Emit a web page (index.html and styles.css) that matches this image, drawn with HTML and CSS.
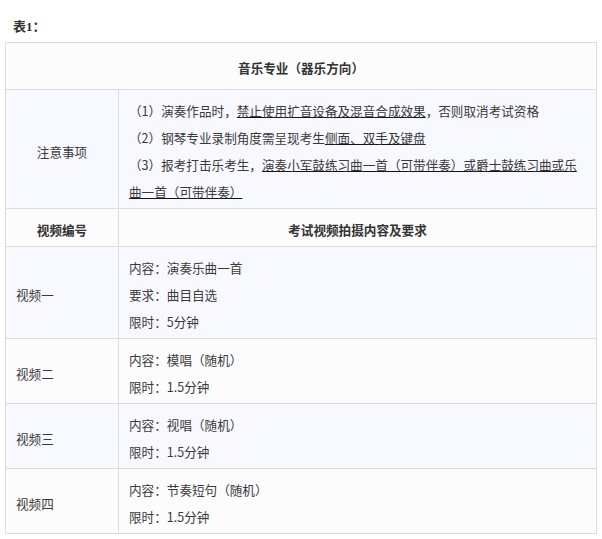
FILE: index.html
```html
<!DOCTYPE html>
<html lang="zh-CN">
<head>
<meta charset="utf-8">
<title>表1</title>
<link rel="stylesheet" href="styles.css">
</head>
<body>
<p class="caption"><strong>表1：</strong></p>
<table class="exam">
  <colgroup><col class="c1"><col class="c2"></colgroup>
  <tr class="odd">
    <th class="title" colspan="2">音乐专业（器乐方向）</th>
  </tr>
  <tr class="even">
    <td class="center">注意事项</td>
    <td>
      <p>（1）演奏作品时，<u>禁止使用扩音设备及混音合成效果</u>，否则取消考试资格</p>
      <p>（2）钢琴专业录制角度需呈现考生<u>侧面、双手及键盘</u></p>
      <p>（3）报考打击乐考生，<u>演奏小军鼓练习曲一首（可带伴奏）或爵士鼓练习曲或乐曲一首（可带伴奏）</u></p>
    </td>
  </tr>
  <tr class="odd">
    <th>视频编号</th>
    <th>考试视频拍摄内容及要求</th>
  </tr>
  <tr class="even">
    <td>视频一</td>
    <td>
      <p>内容：演奏乐曲一首</p>
      <p>要求：曲目自选</p>
      <p>限时：5分钟</p>
    </td>
  </tr>
  <tr class="odd">
    <td>视频二</td>
    <td>
      <p>内容：模唱（随机）</p>
      <p>限时：1.5分钟</p>
    </td>
  </tr>
  <tr class="even">
    <td>视频三</td>
    <td>
      <p>内容：视唱（随机）</p>
      <p>限时：1.5分钟</p>
    </td>
  </tr>
  <tr class="odd">
    <td>视频四</td>
    <td>
      <p>内容：节奏短句（随机）</p>
      <p>限时：1.5分钟</p>
    </td>
  </tr>
</table>
</body>
</html>
```

FILE: styles.css
```css
html, body {
  margin: 0;
  padding: 0;
  background: #ffffff;
}

body {
  font-family: "Noto Sans CJK SC", "Noto Sans", sans-serif;
  color: #333333;
}

.caption {
  margin: 0;
  padding: 18px 0 6px 13px;
  line-height: 18px;
  font-size: 13px;
  font-family: "Liberation Serif", "Noto Sans CJK SC", serif;
  color: #333333;
}

.exam {
  margin-left: 5px;
  width: 592px;
  border-collapse: collapse;
  border: 1px solid #dcdcdc;
  font-size: 12.6px;
  line-height: 27px;
  table-layout: fixed;
  color: #3a3a3a;
}

.c1 {
  width: 113px;
}

.exam th,
.exam td {
  border: 1px solid #dcdcdc;
  padding: 7px 10px 3px;
  vertical-align: middle;
  text-align: left;
}

.exam th {
  text-align: center;
  font-weight: bold;
  color: #333333;
}

.exam th.title {
  padding: 11px 10px 8px;
}

.exam td.center {
  text-align: center;
}

.exam p {
  margin: 0;
}

.exam u {
  text-decoration: underline;
  text-decoration-color: #111111;
  text-underline-offset: 1px;
}

.odd {
  background: #fcfcfc;
}

.even {
  background: #f7f9fe;
}
```
